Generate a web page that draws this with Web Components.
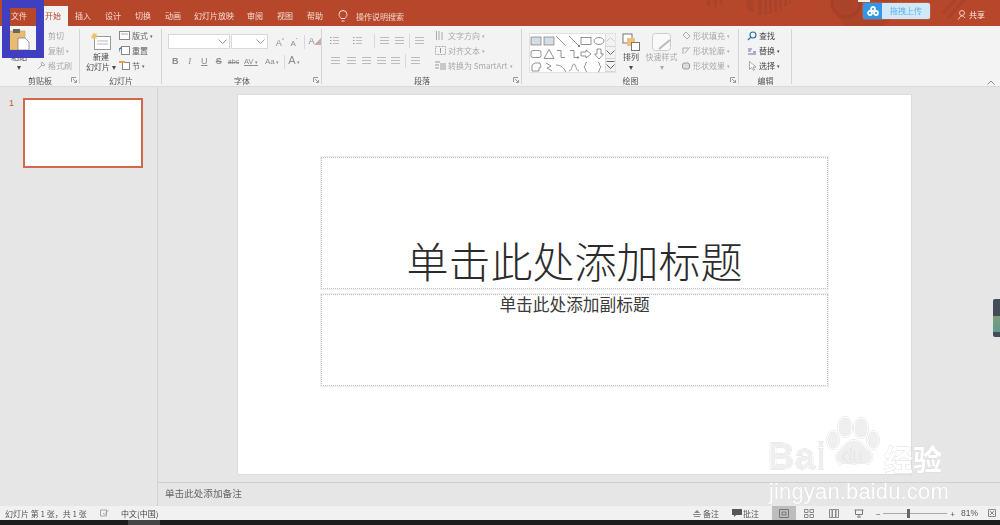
<!DOCTYPE html>
<html lang="zh-CN">
<head>
<meta charset="utf-8">
<title>PowerPoint</title>
<style>
  html, body { margin: 0; height: 100%; overflow: hidden; background: #e6e6e6; }
  body { font-family: "Noto Sans CJK SC", "Liberation Sans", sans-serif; color: #444; }
  svg { display: block; }
</style>
</head>
<body>

<ppt-app>
  <ppt-titlebar>
    <ppt-tab style="margin-right:4px">文件</ppt-tab>
    <ppt-tab active>开始</ppt-tab>
    <ppt-tab>插入</ppt-tab>
    <ppt-tab>设计</ppt-tab>
    <ppt-tab>切换</ppt-tab>
    <ppt-tab>动画</ppt-tab>
    <ppt-tab style="padding:0 6px">幻灯片放映</ppt-tab>
    <ppt-tab>审阅</ppt-tab>
    <ppt-tab>视图</ppt-tab>
    <ppt-tab>帮助</ppt-tab>
  </ppt-titlebar>

  <ppt-ribbon>
    <rb-group label="剪贴板" width="80" launcher>
      <div style="display:flex">
        <rb-large label="粘贴<br>▾" width="38" dark>
          <svg width="24" height="22" viewBox="0 0 24 22"><rect x="1" y="2" width="17" height="19" fill="#e8bc70" stroke="#b8935a" stroke-width=".5"/><rect x="6" y="0" width="7" height="4" fill="#666"/><path d="M11 9h7l4 4v8H11z" fill="#fff" stroke="#777" stroke-width=".7"/></svg>
        </rb-large>
        <div style="display:flex;flex-direction:column;margin-left:-1px">
          <rb-btn disabled>剪切<svg slot="icon" width="9" height="9"></svg></rb-btn>
          <rb-btn disabled caret>复制<svg slot="icon" width="9" height="9"></svg></rb-btn>
          <rb-btn disabled><svg slot="icon" width="9" height="9" viewBox="0 0 9 9"><path d="M1 8l4-4M5 1l3 3-2 1-2-2z" stroke="#aaa" fill="none"/></svg>格式刷</rb-btn>
        </div>
      </div>
    </rb-group>

    <rb-group label="幻灯片" width="82">
      <div style="display:flex;padding-left:3px">
        <rb-large label="新建<br>幻灯片 ▾" width="36" dark>
          <svg width="21" height="19" viewBox="0 0 21 19"><rect x="3.5" y="4.5" width="16" height="13" fill="#fff" stroke="#999"/><path d="M6 9h11M6 12h11" stroke="#bbb"/><path d="M3 0l1 2 2-1-1 2 2 1-2 1 1 2-2-1-1 2-1-2-2 1 1-2-1-1 2-1-1-2 2 1z" fill="#edc267"/></svg>
        </rb-large>
        <div style="display:flex;flex-direction:column">
          <rb-btn caret><svg slot="icon" width="11" height="9" viewBox="0 0 11 9"><rect x=".5" y=".5" width="10" height="8" fill="#fff" stroke="#888"/><path d="M2 3h7" stroke="#aaa"/></svg>版式</rb-btn>
          <rb-btn><svg slot="icon" width="11" height="9" viewBox="0 0 11 9"><rect x="2.5" y=".5" width="8" height="8" fill="#fff" stroke="#888"/><path d="M0 6a3 3 0 0 1 3-4" stroke="#3a7fb5" fill="none" stroke-width="1.4"/></svg>重置</rb-btn>
          <rb-btn caret><svg slot="icon" width="11" height="9" viewBox="0 0 11 9"><rect x="3.5" y="1.5" width="7" height="7" fill="#fff" stroke="#888"/><path d="M0 1h6" stroke="#e5a040" stroke-width="2"/></svg>节</rb-btn>
        </div>
      </div>
    </rb-group>

    <rb-group label="字体" width="160" launcher>
      <div style="padding:5px 0 0 6px">
        <div style="display:flex;align-items:center;height:17px">
          <rb-combo width="63"></rb-combo>
          <rb-combo width="37" style="margin-left:1px"></rb-combo>
          <rb-glyph style="width:14px;margin-left:5px">A<sup style="font-size:5px">^</sup></rb-glyph>
          <rb-glyph style="width:14px;font-size:8px">A<sup style="font-size:5px">ˇ</sup></rb-glyph>
          <i style="width:1px;height:14px;background:#d8d8d8;margin:0 3px"></i>
          <rb-glyph style="width:14px">A<span style="color:#caa;font-size:7px">◢</span></rb-glyph>
        </div>
        <div style="display:flex;align-items:center;height:17px;margin-top:3px">
          <rb-glyph style="width:14.5px;font-weight:700">B</rb-glyph>
          <rb-glyph style="width:14.5px;font-style:italic;font-family:'Liberation Serif',serif">I</rb-glyph>
          <rb-glyph style="width:14.5px;text-decoration:underline">U</rb-glyph>
          <rb-glyph style="width:14.5px;text-decoration:line-through;font-weight:700">S</rb-glyph>
          <rb-glyph style="width:15px;font-size:7px;text-decoration:line-through">abc</rb-glyph>
          <rb-glyph style="width:20px;font-size:7.5px;text-decoration:underline">AV<span style="font-size:5px"> ▾</span></rb-glyph>
          <rb-glyph style="width:22px;font-size:8px">Aa<span style="font-size:5px"> ▾</span></rb-glyph>
          <i style="width:1px;height:14px;background:#d8d8d8;margin:0 1px"></i>
          <rb-glyph style="width:16px;font-size:11px">A<span style="font-size:5px"> ▾</span></rb-glyph>
        </div>
      </div>
    </rb-group>

    <rb-group label="段落" width="200" launcher>
      <div style="display:flex;padding-left:8px">
        <div style="width:105px;padding-top:4px">
          <div style="display:flex;align-items:center;height:17px">
            <rb-lines style="margin-right:14px" bullets></rb-lines>
            <rb-lines style="margin-right:12px" bullets></rb-lines>
            <i style="width:1px;height:14px;background:#d8d8d8;margin-right:5px"></i>
            <rb-lines style="margin-right:6px"></rb-lines>
            <rb-lines style="margin-right:5px"></rb-lines>
            <i style="width:1px;height:14px;background:#d8d8d8;margin-right:5px"></i>
            <rb-lines></rb-lines>
          </div>
          <div style="display:flex;align-items:center;height:17px;margin-top:3px;padding-left:1px">
            <rb-lines style="margin-right:7px"></rb-lines>
            <rb-lines style="margin-right:6px"></rb-lines>
            <rb-lines style="margin-right:6px"></rb-lines>
            <rb-lines style="margin-right:5px"></rb-lines>
            <rb-lines style="margin-right:5px"></rb-lines>
            <i style="width:1px;height:14px;background:#d8d8d8;margin-right:5px"></i>
            <rb-lines></rb-lines>
          </div>
        </div>
        <div style="display:flex;flex-direction:column">
          <rb-btn disabled caret><svg slot="icon" width="11" height="11" viewBox="0 0 11 11"><path d="M1.500 1v9M4 1v9M7 10V2" stroke="#aaa" fill="none"/></svg>文字方向</rb-btn>
          <rb-btn disabled caret><svg slot="icon" width="11" height="11" viewBox="0 0 11 11"><rect x=".5" y="1.500" width="10" height="8" fill="none" stroke="#aaa" stroke-dasharray="2 1"/><path d="M5.500 3v5" stroke="#999"/></svg>对齐文本</rb-btn>
          <rb-btn disabled caret><svg slot="icon" width="11" height="11" viewBox="0 0 11 11"><rect x="5" y="3" width="6" height="7" fill="#c8c8c8"/><path d="M0 2h5M0 5h4M0 8h4" stroke="#999"/></svg>转换为 SmartArt</rb-btn>
        </div>
      </div>
    </rb-group>

    <rb-group label="绘图" width="217" launcher>
      <div style="display:flex;padding:5px 0 0 7px">
        <rb-gallery></rb-gallery>
        <rb-large label="排列<br>▾" width="30" dark style="margin-top:-5px">
          <svg width="18" height="18" viewBox="0 0 18 18"><rect x="1" y="1" width="9" height="9" fill="#fff" stroke="#777"/><rect x="5" y="5" width="8" height="8" fill="#edc27a"/><rect x="9.500" y="9.500" width="8" height="8" fill="#fff" stroke="#777"/></svg>
        </rb-large>
        <rb-large label="快速样式<br>▾" width="33" style="margin:-5px 0 0 -1px">
          <svg width="20" height="18" viewBox="0 0 20 18"><rect x=".5" y=".5" width="18" height="17" rx="3" fill="#f9f9f9" stroke="#ccc"/><path d="M7 16l11-9" stroke="#bbb" stroke-width="2"/></svg>
        </rb-large>
        <div style="display:flex;flex-direction:column;margin:-5px 0 0 4px">
          <rb-btn disabled caret><svg slot="icon" width="9" height="9" viewBox="0 0 9 9"><path d="M4 1l4 4-3 3-4-4z" fill="none" stroke="#aaa"/></svg>形状填充</rb-btn>
          <rb-btn disabled caret><svg slot="icon" width="9" height="9" viewBox="0 0 9 9"><path d="M1 8V2h5M8 1L3 7" fill="none" stroke="#aaa"/></svg>形状轮廓</rb-btn>
          <rb-btn disabled caret><svg slot="icon" width="9" height="9" viewBox="0 0 9 9"><rect x=".5" y="2" width="7" height="6" rx="2" fill="#ddd" stroke="#999"/></svg>形状效果</rb-btn>
        </div>
      </div>
    </rb-group>

    <rb-group label="编辑" width="53">
      <div style="display:flex;flex-direction:column;padding-left:8px">
        <rb-btn dark><svg slot="icon" width="10" height="10" viewBox="0 0 10 10"><circle cx="6" cy="4" r="3" fill="none" stroke="#2a6cab" stroke-width="1.100"/><path d="M3.500 6.500L1 9" stroke="#2a6cab" stroke-width="1.300"/></svg>查找</rb-btn>
        <rb-btn dark caret><svg slot="icon" width="10" height="10" viewBox="0 0 10 10"><path d="M1 3h4M1 5h3M1 8h8" stroke="#8064a2"/><path d="M6 6h3" stroke="#2a6cab"/></svg>替换</rb-btn>
        <rb-btn dark caret><svg slot="icon" width="10" height="10" viewBox="0 0 10 10"><path d="M2.500 .5v8l2-2 2 3 1-.5-1.500-3H9z" fill="#fff" stroke="#888" stroke-width=".7"/></svg>选择</rb-btn>
      </div>
    </rb-group>
  </ppt-ribbon>

  <ppt-workspace>
    <ppt-thumbs></ppt-thumbs>
    <ppt-editor>
      <ppt-slide></ppt-slide>
    </ppt-editor>
  </ppt-workspace>

  <ppt-statusbar></ppt-statusbar>
  <ppt-overlays></ppt-overlays>
</ppt-app>

<script>
class PptApp extends HTMLElement {
  constructor() {
    super();
    this.attachShadow({ mode: 'open' }).innerHTML = `<style>
      :host { display: flex; flex-direction: column; width: 1000px; height: 525px; position: relative; overflow: hidden; }
    </style><slot></slot>`;
  }
}

class PptTitlebar extends HTMLElement {
  constructor() {
    super();
    this.attachShadow({ mode: 'open' }).innerHTML = `<style>
      :host { display: block; height: 26px; background: #b7472a; position: relative; flex: none; filter: blur(.3px); overflow: hidden; }
      .bar { display: flex; align-items: flex-end; height: 26px; padding-left: 4px; position: relative; }
      .search { display: flex; align-items: center; height: 20px; margin-left: 8px; color: #f3d5cc; font-size: 8px; }
      .search svg { margin-right: 8px; }
      .share { position: absolute; right: 15px; top: 9px; display: flex; gap: 2px; align-items: center; color: #fbe9e4; font-size: 8px; }
      .deco { position: absolute; left: 700px; top: 0; }
      .upload { position: absolute; left: 863px; top: 3px; display: flex; width: 67px; height: 16px; border-radius: 2px; overflow: hidden; box-shadow: 0 0 1px #fff; }
      .upload b { width: 19px; background: #2f96ea; display: flex; align-items: center; justify-content: center; }
      .upload span { flex: 1; background: #cfe9fb; color: #5fb2e8; font-size: 8px; line-height: 16px; text-align: center; }
      .notch { position: absolute; left: 858px; top: 0; width: 12px; height: 2px; background: #eee; }
    </style>
    <svg class="deco" width="300" height="26" viewBox="0 0 300 26" fill="#a9432a" stroke="none">
      <path d="M7 0h3v6H7zM14 0h3l-1 9h-1zM20 0h3l-1 5h-2z"/>
      <path d="M46 0h7l1 13-6-3zM58 0h4v15h-4zM64 0h3v15h-3zM69 0h3v14h-3zM74 0h3v12h-3zM79 0h3v9h-3zM84 0h3v6h-3zM89 0h2v4h-2z"/>
      <path d="M133 0a32 32 0 0 0 64 0zM147 0a18 18 0 0 0 0 0z" opacity=".8"/>
      <circle cx="146" cy="3" r="14" fill="none" stroke="#a63f27" stroke-width="3"/>
      <circle cx="146" cy="3" r="5"/>
      <path d="M252 0h5l-12 14-3-2zM262 0h4l-17 19-2-3z"/>
    </svg>
    <div class="bar"><slot></slot>
      <div class="search">
        <svg width="10" height="12" viewBox="0 0 10 12" fill="none" stroke="#f6dcd4"><path d="M3 8.500C2 7 1 6 1 4.500a4 4 0 0 1 8 0C9 6 8 7 7 8.500zM3.500 11h3"/></svg>
        操作说明搜索
      </div>
    </div>
    <i class="notch"></i>
    <div class="upload">
      <b><svg width="12" height="10" viewBox="0 0 12 10" fill="none" stroke="#fff" stroke-width="1.800"><circle cx="6" cy="3" r="2"/><circle cx="3" cy="7" r="2"/><circle cx="9" cy="7" r="2"/></svg></b>
      <span>拖拽上传</span>
    </div>
    <div class="share">
      <svg width="9" height="10" viewBox="0 0 9 10" fill="none" stroke="#fbe9e4" stroke-width=".8"><circle cx="4" cy="3" r="2.500"/><path d="M.5 9.500C1 7 3 6 4 6s2 .5 3 2"/></svg>
      共享
    </div>`;
  }
}

class PptTab extends HTMLElement {
  constructor() {
    super();
    this.attachShadow({ mode: 'open' }).innerHTML = `<style>
      :host { display: block; height: 20px; line-height: 20px; padding: 0 7px; font-size: 8px; color: #f6dcd4; text-align: center; }
      :host([active]) { background: #f3f3f3; color: #b7472a; }
    </style><slot></slot>`;
  }
}

class PptRibbon extends HTMLElement {
  constructor() {
    super();
    this.attachShadow({ mode: 'open' }).innerHTML = `<style>
      :host { display: flex; flex: none; height: 61px; background: #f3f3f3; border-bottom: 1px solid #dadada; box-sizing: border-box; position: relative; filter: blur(.3px); }
      .collapse { position: absolute; left: 987px; top: 54px; display: block; }
    </style><slot></slot>
    <svg class="collapse" width="8" height="5" viewBox="0 0 8 5" fill="none" stroke="#888"><path d="M.5 4.500l3.500-3.500 3.500 3.500"/></svg>`;
  }
}

class RbGroup extends HTMLElement {
  constructor() {
    super();
    this.attachShadow({ mode: 'open' });
  }
  connectedCallback() {
    const launcher = this.hasAttribute('launcher')
      ? '<svg class="launcher" width="6" height="6" viewBox="0 0 6 6" fill="none" stroke="#999"><path d="M.5 5V.5H5M2 2l3.500 3.500M3 5.500h2.500V3"/></svg>'
      : '';
    this.shadowRoot.innerHTML = `<style>
      :host { display: flex; flex-direction: column; position: relative; box-sizing: border-box; width: ${this.getAttribute('width')}px; height: 60px; flex: none; }
      :host::after { content: ""; position: absolute; right: 0; top: 3px; bottom: 2px; width: 1px; background: #d4d4d4; }
      .body { height: 48px; padding-top: 2px; box-sizing: border-box; flex: none; }
      .label { text-align: center; font-size: 8px; line-height: 13px; color: #555; }
      .launcher { position: absolute; right: 3px; bottom: 3px; }
    </style>
    <div class="body"><slot></slot></div>
    <div class="label">${this.getAttribute('label')}</div>${launcher}`;
  }
}

class RbBtn extends HTMLElement {
  constructor() {
    super();
    const caret = this.hasAttribute('caret') ? '<i>▾</i>' : '';
    this.attachShadow({ mode: 'open' }).innerHTML = `<style>
      :host { display: flex; align-items: center; height: 15px; font-size: 8px; color: #606060; white-space: nowrap; }
      :host([disabled]) { color: #a9a9a9; }
      :host([dark]) { color: #444; }
      .icon { margin-right: 2px; display: block; }
      i { font-style: normal; font-size: 5px; margin-left: 2px; }
    </style><span class="icon"><slot name="icon"></slot></span><slot></slot>${caret}`;
  }
}

class RbLarge extends HTMLElement {
  constructor() {
    super();
    this.attachShadow({ mode: 'open' });
  }
  connectedCallback() {
    this.shadowRoot.innerHTML = `<style>
      :host { display: flex; flex-direction: column; align-items: center; width: ${this.getAttribute('width')}px; font-size: 8px; color: #a9a9a9; flex: none; }
      :host([dark]) { color: #4a4a4a; }
      .ico { height: 22px; display: flex; align-items: flex-end; margin-top: 1px; }
      .txt { margin-top: 1px; line-height: 9.500px; text-align: center; white-space: nowrap; }
    </style><div class="ico"><slot></slot></div><div class="txt">${this.getAttribute('label')}</div>`;
  }
}

class RbCombo extends HTMLElement {
  constructor() {
    super();
    this.attachShadow({ mode: 'open' });
  }
  connectedCallback() {
    this.shadowRoot.innerHTML = `<style>
      :host { display: flex; align-items: center; justify-content: flex-end; box-sizing: border-box; width: ${this.getAttribute('width')}px; height: 15px; background: #fff; border: 1px solid #d9d9d9; padding-right: 2px; }
    </style><svg width="9" height="5" viewBox="0 0 9 5" fill="none" stroke="#999"><path d="M.5.500l4 4 4-4"/></svg>`;
  }
}

class RbGlyph extends HTMLElement {
  constructor() {
    super();
    this.attachShadow({ mode: 'open' }).innerHTML = `<style>
      :host { display: block; flex: none; text-align: center; font: 9px/15px "Liberation Sans", sans-serif; color: #8c8c8c; white-space: nowrap; }
    </style><slot></slot>`;
  }
}

class RbLines extends HTMLElement {
  constructor() {
    super();
    const dots = this.hasAttribute('bullets');
    this.attachShadow({ mode: 'open' }).innerHTML = `<style>
      :host { display: block; width: 9px; height: 9px; flex: none; }
      svg { display: block; }
    </style><svg width="9" height="9" viewBox="0 0 9 9" stroke="#bcbcbc">
      <path d="M${dots ? 3 : 0} 1.500h9M${dots ? 3 : 0} 4.500h9M${dots ? 3 : 0} 7.500h9"/>
      ${dots ? '<path d="M0 1.500h1.500M0 4.500h1.500M0 7.500h1.500" stroke="#999"/>' : ''}
    </svg>`;
  }
}

class RbGallery extends HTMLElement {
  constructor() {
    super();
    const shapes = [
      '<rect x="1" y="2" width="10" height="8" fill="#d5dde6" stroke="#666" stroke-width=".6"/>',
      '<rect x="1" y="2" width="10" height="8" fill="#d5dde6" stroke="#666" stroke-width=".6"/>',
      '<path d="M1 1l10 10"/>',
      '<path d="M1 1l10 10"/><circle cx="11" cy="11" r=".8" fill="#666"/>',
      '<rect x="1" y="2.500" width="10" height="7"/>',
      '<ellipse cx="6" cy="6" rx="5" ry="3.500"/>',
      '<rect x="1" y="2.500" width="10" height="7" rx="2"/>',
      '<path d="M6 1.500l5 9H1z"/>',
      '<path d="M2 2.500h4v7h4"/>',
      '<path d="M2 2.500h4v7h4"/><circle cx="10" cy="9.500" r=".8"/>',
      '<path d="M1 4h5V2l5 4-5 4V8H1z"/>',
      '<path d="M4 1h4v5h2.500L6 11 1.500 6H4z"/>',
      '<path d="M2 10V4l3-2h5l1 4-2 1v3z"/>',
      '<path d="M3 2l5 3-4 2 5 3"/>',
      '<path d="M1 4c5 0 8 3 10 7"/>',
      '<path d="M1 10c3 0 3-7 5-7s2 7 5 7"/>',
      '<path d="M7 1C5 1 6 5 4 6c2 1 1 5 3 5"/>',
      '<path d="M5 1c2 0 1 4 3 5-2 1-1 5-3 5"/>',
    ].map((s) => `<svg width="12" height="12" viewBox="0 0 12 12" fill="none" stroke="#666" stroke-width=".7">${s}</svg>`).join('');
    this.attachShadow({ mode: 'open' }).innerHTML = `<style>
      :host { display: flex; width: 87px; height: 40px; box-sizing: border-box; border: 1px solid #e2e2e2; background: #fff; flex: none; }
      .grid { display: grid; grid-template-columns: repeat(6, 12.500px); grid-auto-rows: 13px; width: 75px; justify-items: center; align-items: center; }
      .scroll { width: 11px; display: flex; flex-direction: column; background: #f2f2f2; border-left: 1px solid #ddd; }
      .scroll div { flex: 1; display: flex; align-items: center; justify-content: center; border-bottom: 1px solid #d4d4d4; }
    </style>
    <div class="grid">${shapes}</div>
    <div class="scroll">
      <div><svg width="9" height="5" viewBox="0 0 9 5" fill="none" stroke="#ccc"><path d="M.5 4.500l4-4 4 4"/></svg></div>
      <div><svg width="9" height="5" viewBox="0 0 9 5" fill="none" stroke="#666"><path d="M.5.500l4 4 4-4"/></svg></div>
      <div><svg width="9" height="8" viewBox="0 0 9 8" fill="none" stroke="#666"><path d="M.5.500h8M.5 3.500l4 4 4-4"/></svg></div>
    </div>`;
  }
}

class PptWorkspace extends HTMLElement {
  constructor() {
    super();
    this.attachShadow({ mode: 'open' }).innerHTML = `<style>
      :host { display: flex; height: 419px; flex: none; background: #e6e6e6; }
    </style><slot></slot>`;
  }
}

class PptThumbs extends HTMLElement {
  constructor() {
    super();
    this.attachShadow({ mode: 'open' }).innerHTML = `<style>
      :host { display: flex; width: 158px; box-sizing: border-box; border-right: 1px solid #d2d2d2; padding: 11px 0 0 9px; flex: none; align-items: flex-start; }
      .n { width: 14px; font: 9px/11px "Liberation Sans", sans-serif; color: #c9583a; }
      .thumb { width: 120px; height: 70px; box-sizing: border-box; background: #fff; border: 2px solid #d3694c; }
    </style><div class="n">1</div><div class="thumb"></div>`;
  }
}

class PptEditor extends HTMLElement {
  constructor() {
    super();
    this.attachShadow({ mode: 'open' }).innerHTML = `<style>
      :host { display: flex; flex-direction: column; flex: 1; min-width: 0; }
      .stage { height: 395px; box-sizing: border-box; padding: 7px 0 0 79px; flex: none; }
      .notes { flex: 1; border-top: 1px solid #cfcfcf; padding-left: 7px; font-size: 9.600px; line-height: 20px; color: #666; filter: blur(.25px); }
    </style>
    <div class="stage"><slot></slot></div>
    <div class="notes">单击此处添加备注</div>`;
  }
}

class PptSlide extends HTMLElement {
  constructor() {
    super();
    this.attachShadow({ mode: 'open' }).innerHTML = `<style>
      :host { display: flex; flex-direction: column; align-items: flex-start; box-sizing: border-box; width: 675px; height: 381px; background: #fff; border: 1px solid #dcdcdc; padding: 62px 0 0 83px; }
      .ph { box-sizing: border-box; width: 507px; border: 1px dotted #bdbdbd; outline: 1px solid #efefef; text-align: center; color: #2b2b2b; white-space: nowrap; }
      .title { height: 132px; display: flex; align-items: flex-end; justify-content: center; font-size: 42px; line-height: 56px; font-weight: 300; }
      .sub { height: 92px; margin-top: 5px; font-size: 16.700px; line-height: 18px; color: #3a3a3a; }
    </style>
    <div class="ph title">单击此处添加标题</div>
    <div class="ph sub">单击此处添加副标题</div>`;
  }
}

class PptStatusbar extends HTMLElement {
  constructor() {
    super();
    this.attachShadow({ mode: 'open' }).innerHTML = `<style>
      :host { display: block; flex: none; position: relative; height: 19px; background: #1c1c1c; }
      .bar { height: 14px; background: #f1f1f1; display: flex; align-items: center; font-size: 8px; color: #555; filter: blur(.25px); white-space: nowrap; }
      .left { padding-left: 5px; width: 82px; }
      .spell { margin-left: 13px; }
      .lang { margin-left: 12px; color: #444; }
      .sp { flex: 1; }
      .notes { display: flex; align-items: center; gap: 2px; }
      .comment { display: flex; align-items: center; gap: 1px; margin-left: 13px; margin-right: 13px; }
      .views { display: flex; gap: 1px; }
      .view { width: 24px; height: 14px; display: flex; align-items: center; justify-content: center; }
      .view.on { background: #bdbdbd; }
      .zoom { display: flex; align-items: center; margin-left: 5px; }
      .track { width: 64px; height: 1px; background: #aaa; margin: 0 4px 0 2px; position: relative; }
      .track b { position: absolute; left: 24px; top: -4px; width: 3px; height: 9px; background: #666; }
      .pct { margin-left: 6px; font: 8.500px "Liberation Sans", sans-serif; }
      .fit { margin: 0 4px 0 10px; }
      .dark { position: absolute; left: 128px; top: 14px; width: 32px; height: 5px; background: #444; }
    </style>
    <div class="bar">
      <div class="left">幻灯片 第 1 张，共 1 张</div>
      <svg class="spell" width="9" height="8" viewBox="0 0 9 8" fill="none" stroke="#888" stroke-width=".7"><path d="M.5 1h6v6h-6zM3 4l1.500 1.500L8.500 1"/></svg>
      <div class="lang">中文(中国)</div>
      <div class="sp"></div>
      <div class="notes"><svg width="8" height="7" viewBox="0 0 8 7" fill="#888"><path d="M4 0l3 3H1zM0 4h8v1H0zM1 6h6v1H1z"/></svg>备注</div>
      <div class="comment"><svg width="10" height="8" viewBox="0 0 10 8" fill="#555"><path d="M0 0h10v6H4L2 8V6H0z"/></svg>批注</div>
      <div class="views">
        <div class="view on"><svg width="10" height="9" viewBox="0 0 10 9" fill="none" stroke="#777"><path d="M.5.500h9v8h-9zM3 3h4v3H3z"/></svg></div>
        <div class="view"><svg width="10" height="9" viewBox="0 0 10 9" fill="none" stroke="#888"><path d="M.5.500h3.500v3H.5zM6 .5h3.500v3H6zM.5 5.500h3.500v3H.5zM6 5.500h3.500v3H6z"/></svg></div>
        <div class="view"><svg width="10" height="9" viewBox="0 0 10 9" fill="none" stroke="#888"><path d="M.5.500h2.500v8H.5zM3.500.5h3v8h-3zM7 .5h2.500v8H7z"/></svg></div>
        <div class="view"><svg width="10" height="9" viewBox="0 0 10 9" fill="none" stroke="#777"><path d="M.5 1h9M1.500 1v4.500h7V1M5 5.500v2M3 8h4"/></svg></div>
      </div>
      <div class="zoom">
        <span>−</span>
        <div class="track"><b></b></div>
        <span>+</span>
        <span class="pct">81%</span>
      </div>
      <svg class="fit" width="8" height="8" viewBox="0 0 8 8" fill="none" stroke="#888"><path d="M.5.500h7v7h-7zM2 2l4 4M6 2L2 6"/></svg>
    </div>
    <div class="dark"></div>`;
  }
}

// blue marker, side handle and watermark all sit over the screenshot
class PptOverlays extends HTMLElement {
  constructor() {
    super();
    this.attachShadow({ mode: 'open' }).innerHTML = `<style>
      :host { position: absolute; inset: 0; pointer-events: none; display: block; }
      .mark { position: absolute; left: 2px; top: 0; width: 42px; height: 58px; box-sizing: border-box; border: 8px solid #3f3fc0; filter: blur(.4px); }
      .handle { position: absolute; left: 993px; top: 299px; width: 7px; height: 38px; border-radius: 2px 0 0 2px; background: linear-gradient(#444c58 0 45%, #7f9f78 45%, #5f9a90 87%, #444c58 87%); }
      .wm { position: absolute; color: rgba(255,255,255,.3); -webkit-text-stroke: 1px #fff; filter: drop-shadow(0 0 .4px #b0b0b0); white-space: nowrap; }
      .bai { left: 768px; top: 437px; font: 700 36px/40px "Liberation Sans", sans-serif; letter-spacing: 1px; }
      .du { left: 842px; top: 445px; font: 400 19px/22px "Liberation Sans", sans-serif; -webkit-text-stroke: .6px #fff; }
      .jy { left: 884px; top: 440px; font: 700 29px/36px "Noto Sans CJK SC", sans-serif; color: #fff; -webkit-text-stroke: .4px #fff; }
      .url { left: 769px; top: 478px; font: 400 22px/28px "Liberation Sans", sans-serif; letter-spacing: .15px; color: #fff; -webkit-text-stroke: .3px #fff; }
      .paw { position: absolute; left: 826px; top: 416px; filter: drop-shadow(0 0 .4px #b0b0b0); }
    </style>
    <div class="mark"></div>
    <div class="handle"></div>
    <svg class="paw" width="56" height="53" viewBox="0 0 56 53" fill="rgba(255,255,255,.3)" stroke="#fff" stroke-width="1.500">
      <ellipse cx="19" cy="11" rx="7" ry="10"/><ellipse cx="35" cy="12" rx="7" ry="10"/>
      <ellipse cx="7" cy="24" rx="6" ry="9"/><ellipse cx="47" cy="24" rx="6" ry="9"/>
      <path d="M28 24c6 0 9 5 13 9 5 4 7 8 4 12-3 5-9 3-17 3s-14 2-17-3c-3-4-1-8 4-12 4-4 7-9 13-9z"/>
    </svg>
    <div class="wm bai">Bai</div>
    <div class="wm du">du</div>
    <div class="wm jy">经验</div>
    <div class="wm url">jingyan.baidu.com</div>`;
  }
}

customElements.define('ppt-app', PptApp);
customElements.define('ppt-titlebar', PptTitlebar);
customElements.define('ppt-tab', PptTab);
customElements.define('ppt-ribbon', PptRibbon);
customElements.define('rb-group', RbGroup);
customElements.define('rb-btn', RbBtn);
customElements.define('rb-large', RbLarge);
customElements.define('rb-combo', RbCombo);
customElements.define('rb-glyph', RbGlyph);
customElements.define('rb-lines', RbLines);
customElements.define('rb-gallery', RbGallery);
customElements.define('ppt-workspace', PptWorkspace);
customElements.define('ppt-thumbs', PptThumbs);
customElements.define('ppt-editor', PptEditor);
customElements.define('ppt-slide', PptSlide);
customElements.define('ppt-statusbar', PptStatusbar);
customElements.define('ppt-overlays', PptOverlays);
</script>
</body>
</html>
